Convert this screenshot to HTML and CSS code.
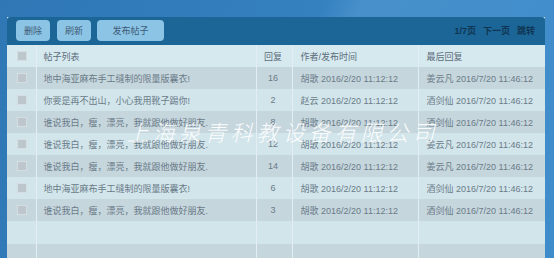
FILE: index.html
```html
<!DOCTYPE html>
<html lang="zh">
<head>
<meta charset="utf-8">
<title>帖子列表</title>
<link rel="stylesheet" href="styles.css">
</head>
<body>
<div class="page">
  <div class="panel">
    <div class="toolbar">
      <div class="actions">
        <button class="btn btn-sm">删除</button>
        <button class="btn btn-sm">刷新</button>
        <button class="btn btn-lg">发布帖子</button>
      </div>
      <div class="pager">
        <span>1/7页</span>
        <span>下一页</span>
        <span>跳转</span>
      </div>
    </div>
    <table class="grid">
      <colgroup>
        <col class="c-check"><col class="c-title"><col class="c-reply"><col class="c-author"><col class="c-last">
      </colgroup>
      <thead>
        <tr class="head"><td><i class="box"></i></td><td>帖子列表</td><td class="num">回复</td><td>作者/发布时间</td><td>最后回复</td></tr>
      </thead>
      <tbody>
        <tr class="dark"><td><i class="box"></i></td><td>地中海亚麻布手工缝制的限量版囊衣!</td><td class="num">16</td><td>胡歌 2016/2/20 11:12:12</td><td>姜云凡 2016/7/20 11:46:12</td></tr>
        <tr class="light"><td><i class="box"></i></td><td>你要是再不出山，小心我用靴子踢你!</td><td class="num">2</td><td>赵云 2016/2/20 11:12:12</td><td>酒剑仙 2016/7/20 11:46:12</td></tr>
        <tr class="dark"><td><i class="box"></i></td><td>谁说我白，瘦，漂亮，我就跟他做好朋友.</td><td class="num">8</td><td>胡歌 2016/2/20 11:12:12</td><td>酒剑仙 2016/7/20 11:46:12</td></tr>
        <tr class="light"><td><i class="box"></i></td><td>谁说我白，瘦，漂亮，我就跟他做好朋友.</td><td class="num">12</td><td>胡歌 2016/2/20 11:12:12</td><td>姜云凡 2016/7/20 11:46:12</td></tr>
        <tr class="dark"><td><i class="box"></i></td><td>谁说我白，瘦，漂亮，我就跟他做好朋友.</td><td class="num">14</td><td>胡歌 2016/2/20 11:12:12</td><td>姜云凡 2016/7/20 11:46:12</td></tr>
        <tr class="light"><td><i class="box"></i></td><td>地中海亚麻布手工缝制的限量版囊衣!</td><td class="num">6</td><td>胡歌 2016/2/20 11:12:12</td><td>酒剑仙 2016/7/20 11:46:12</td></tr>
        <tr class="dark"><td><i class="box"></i></td><td>谁说我白，瘦，漂亮，我就跟他做好朋友.</td><td class="num">3</td><td>胡歌 2016/2/20 11:12:12</td><td>酒剑仙 2016/7/20 11:46:12</td></tr>
        <tr class="light empty"><td></td><td></td><td></td><td></td><td></td></tr>
        <tr class="dark empty short"><td></td><td></td><td></td><td></td><td></td></tr>
      </tbody>
    </table>
    <div class="watermark">上海泉青科教设备有限公司</div>
  </div>
</div>
</body>
</html>
```
FILE: styles.css
```css
html, body {
  margin: 0;
  padding: 0;
  background: #ffffff;
}
body {
  font-family: "Liberation Sans", "Noto Sans CJK SC", sans-serif;
  font-size: 9px;
}
.page {
  width: 554px;
  height: 258px;
  box-sizing: border-box;
  padding: 17px 9px 0 7px;
  background: linear-gradient(110deg, #2f77b5 0%, #3580bf 50%, #4790cb 56%, #3f8ccb 100%);
  overflow: hidden;
}
.panel {
  position: relative;
  width: 538px;
  height: 241px;
  background: #d2e5eb;
}
.toolbar {
  height: 28px;
  box-sizing: border-box;
  padding: 3px 10px 0 9px;
  background: #1c6697;
  border-radius: 3px 3px 0 0;
  display: flex;
  justify-content: space-between;
  align-items: flex-start;
}
.actions {
  display: flex;
  gap: 6px;
}
.btn {
  height: 21px;
  border: none;
  border-radius: 4px;
  background: #8cc4e6;
  color: #3d5a75;
  font-family: "Liberation Sans", "Noto Sans CJK SC", sans-serif;
  font-size: 9px;
  padding: 0;
  margin: 0;
}
.btn-sm { width: 34px; }
.btn-sm + .btn-sm { margin-left: 1px; }
.btn-lg { width: 67px; }
.pager {
  display: flex;
  gap: 7px;
  height: 21px;
  align-items: center;
  color: #0f3552;
  font-weight: bold;
  font-size: 9px;
}
.grid {
  width: 538px;
  border-collapse: collapse;
  table-layout: fixed;
}
.c-check { width: 29px; }
.c-title { width: 220px; }
.c-reply { width: 36px; }
.c-author { width: 126px; }
.c-last { width: 127px; }
.grid td {
  height: 22px;
  padding: 0 0 0 8px;
  color: #6a7b88;
  white-space: nowrap;
  overflow: hidden;
  border-left: 1px solid #e2eef2;
  vertical-align: middle;
}
.grid td:first-child {
  border-left: none;
  padding-left: 10px;
}
.grid td:nth-child(2) { padding-left: 7px; }
.grid td.num {
  text-align: center;
  padding: 0 2px 0 0;
}
.head td {
  color: #5c6d7a;
  background: #d6e9ef;
}
.dark td { background: #c6d6dd; }
.light td { background: #d2e5eb; }
.grid .empty td { height: 23px; }
.grid .short td { height: 14px; }
.box {
  display: block;
  width: 10px;
  height: 10px;
  box-sizing: border-box;
  background: #bcc6cb;
  border: 1px solid #d5dfe3;
}
.watermark {
  position: absolute;
  left: 122px;
  top: 101px;
  color: #ffffff;
  font-family: "Noto Sans CJK SC", sans-serif;
  font-weight: 300;
  font-size: 22px;
  letter-spacing: 4px;
  line-height: 26px;
  transform: skewX(-14deg);
  opacity: 0.92;
  white-space: nowrap;
}
```
